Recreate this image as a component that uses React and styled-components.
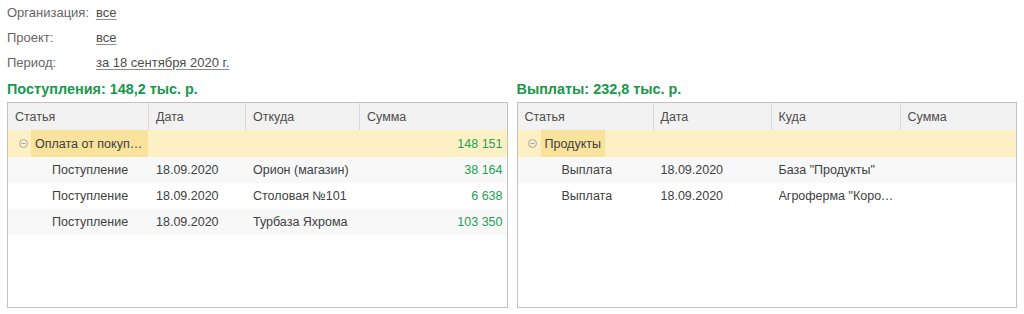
import React from 'react';
import styled, { createGlobalStyle } from 'styled-components';

const GlobalStyle = createGlobalStyle`
    html, body {
        margin: 0;
        padding: 0;
        background: #fff;
    }
    body {
        font-family: "Liberation Sans", Arial, sans-serif;
        font-size: 12.5px;
        color: #404040;
    }
`;

const Page = styled.div`
    padding: 0 7px;
`;

const Filters = styled.div`
    display: flex;
    flex-direction: column;
`;

const FilterRow = styled.div`
    display: flex;
    align-items: center;
    height: 25px;
    font-size: 13px;
`;

const FilterLabel = styled.span`
    width: 89px;
    color: #666;
`;

const FilterLink = styled.a`
    color: #4d4d4d;
    text-decoration: underline;
    text-decoration-color: #8c8c8c;
    text-underline-offset: 2px;
    cursor: pointer;
`;

const Panels = styled.div`
    display: grid;
    grid-template-columns: 1fr 1fr;
    column-gap: 9px;
`;

const Panel = styled.div`
    display: flex;
    flex-direction: column;
    min-width: 0;
`;

const Title = styled.div`
    font-weight: bold;
    font-size: 14.4px;
    color: #17984b;
    line-height: 16px;
    padding: 6px 0 5px;
`;

const Table = styled.div`
    box-sizing: border-box;
    height: 206px;
    border: 1px solid #c2c2c2;
    box-shadow: 0 1px 0 #dadada;
    overflow: hidden;
`;

const Row = styled.div`
    display: grid;
    grid-template-columns: ${(p) => p.$cols};
    height: ${(p) => p.$height || 26}px;
    background: ${(p) => p.$bg || '#fff'};
`;

const HeadCell = styled.div`
    display: flex;
    align-items: center;
    padding-left: 7px;
    color: #4d4d4d;
    border-left: ${(p) => (p.$first ? 'none' : '1px solid #d9d9d9')};
    white-space: nowrap;
    overflow: hidden;
`;

const Cell = styled.div`
    display: flex;
    align-items: center;
    justify-content: ${(p) => (p.$right ? 'flex-end' : 'flex-start')};
    padding: 0 4px 0 ${(p) => p.$indent ?? 8}px;
    color: ${(p) => (p.$green ? '#24a157' : '#404040')};
    white-space: nowrap;
    overflow: hidden;
    min-width: 0;
`;

const Ellipsis = styled.span`
    overflow: hidden;
    text-overflow: ellipsis;
    white-space: nowrap;
`;

const GroupCell = styled.div`
    display: flex;
    align-items: stretch;
    padding-left: 7px;
    min-width: 0;
    overflow: hidden;
`;

const Toggle = styled.span`
    display: flex;
    align-items: center;
    justify-content: center;
    width: 16px;
    flex: none;
`;

const Current = styled.span`
    display: flex;
    align-items: center;
    padding: 0 4px;
    background: #f9e29c;
    color: #404040;
    min-width: 0;
    overflow: hidden;
`;

const MinusIcon = () => (
    <svg width="9" height="9" viewBox="0 0 9 9">
        <circle cx="4.5" cy="4.5" r="4" fill="none" stroke="#a6a6a6" strokeWidth="1" />
        <line x1="2.3" y1="4.5" x2="6.7" y2="4.5" stroke="#a6a6a6" strokeWidth="1" />
    </svg>
);

const incomeCols = '140px 97px 114px 1fr';
const paymentCols = '135px 118px 129px 1fr';

const income = {
    title: 'Поступления: 148,2 тыс. р.',
    cols: incomeCols,
    headers: ['Статья', 'Дата', 'Откуда', 'Сумма'],
    group: { name: 'Оплата от покупателей', sum: '148 151' },
    rows: [
        ['Поступление', '18.09.2020', 'Орион (магазин)', '38 164'],
        ['Поступление', '18.09.2020', 'Столовая №101', '6 638'],
        ['Поступление', '18.09.2020', 'Турбаза Яхрома', '103 350'],
    ],
};

const payments = {
    title: 'Выплаты: 232,8 тыс. р.',
    cols: paymentCols,
    headers: ['Статья', 'Дата', 'Куда', 'Сумма'],
    group: { name: 'Продукты', sum: '' },
    rows: [
        ['Выплата', '18.09.2020', 'База "Продукты"', ''],
        ['Выплата', '18.09.2020', 'Агроферма "Короленко"', ''],
    ],
};

const MoneyTable = ({ data }) => (
    <Panel>
        <Title>{data.title}</Title>
        <Table>
            <Row $cols={data.cols} $height={27} $bg="#f2f2f2">
                {data.headers.map((h, i) => (
                    <HeadCell key={h} $first={i === 0}>{h}</HeadCell>
                ))}
            </Row>
            <Row $cols={data.cols} $height={27} $bg="#fdf0c4">
                <GroupCell>
                    <Toggle><MinusIcon /></Toggle>
                    <Current><Ellipsis>{data.group.name}</Ellipsis></Current>
                </GroupCell>
                <Cell />
                <Cell />
                <Cell $right $green>{data.group.sum}</Cell>
            </Row>
            {data.rows.map((r, i) => (
                <Row key={i} $cols={data.cols} $bg={i % 2 === 0 ? '#f8f8f8' : '#fff'}>
                    <Cell $indent={44}><Ellipsis>{r[0]}</Ellipsis></Cell>
                    <Cell>{r[1]}</Cell>
                    <Cell><Ellipsis>{r[2]}</Ellipsis></Cell>
                    <Cell $right $green>{r[3]}</Cell>
                </Row>
            ))}
        </Table>
    </Panel>
);

const App = () => (
    <Page>
        <GlobalStyle />
        <Filters>
            <FilterRow>
                <FilterLabel>Организация:</FilterLabel>
                <FilterLink>все</FilterLink>
            </FilterRow>
            <FilterRow>
                <FilterLabel>Проект:</FilterLabel>
                <FilterLink>все</FilterLink>
            </FilterRow>
            <FilterRow>
                <FilterLabel>Период:</FilterLabel>
                <FilterLink>за 18 сентября 2020 г.</FilterLink>
            </FilterRow>
        </Filters>
        <Panels>
            <MoneyTable data={income} />
            <MoneyTable data={payments} />
        </Panels>
    </Page>
);

export default App;
